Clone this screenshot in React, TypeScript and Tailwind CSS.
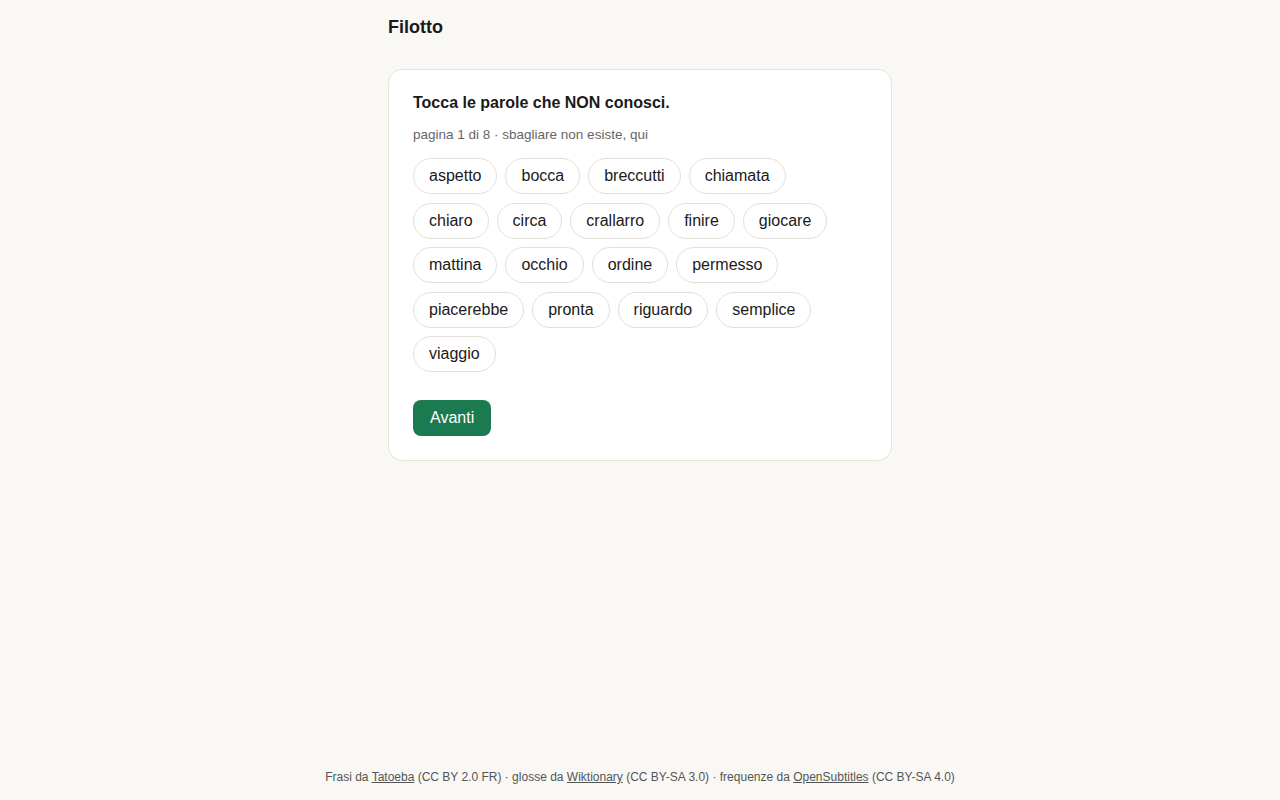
const words = [
  "aspetto",
  "bocca",
  "breccutti",
  "chiamata",
  "chiaro",
  "circa",
  "crallarro",
  "finire",
  "giocare",
  "mattina",
  "occhio",
  "ordine",
  "permesso",
  "piacerebbe",
  "pronta",
  "riguardo",
  "semplice",
  "viaggio",
];

export default function App() {
  return (
    <div className="min-h-[800px] flex flex-col bg-[#f9f8f4] text-[#1a1a1a] font-['Liberation_Sans',Arial,sans-serif]">
      <main className="flex-1 w-[504px] mx-auto pt-[15px]">
        <h1 className="text-[18px] leading-6 font-bold">Filotto</h1>

        <section className="mt-[30px] bg-white border border-[#e8e4da] rounded-[14px] p-6">
          <h2 className="text-[16px] leading-[18px] font-bold">Tocca le parole che NON conosci.</h2>
          <p className="mt-[15px] text-[13.5px] leading-4 text-[#666]">
            pagina 1 di 8 · sbagliare non esiste, qui
          </p>

          <div className="mt-[15px] flex flex-wrap gap-x-2 gap-y-[8.5px]">
            {words.map((w) => (
              <button
                key={w}
                className="h-9 px-[15px] rounded-full border border-[#e4e0d7] bg-white text-[16px] text-[#1a1a1a]"
              >
                {w}
              </button>
            ))}
          </div>

          <button className="mt-7 h-9 px-[17px] rounded-lg bg-[#1b7a4f] text-white text-[16px]">
            Avanti
          </button>
        </section>
      </main>

      <footer className="pb-[15px] text-center text-[12px] leading-4 text-[#555]">
        Frasi da <a className="underline">Tatoeba</a> (CC BY 2.0 FR) · glosse da{" "}
        <a className="underline">Wiktionary</a> (CC BY-SA 3.0) · frequenze da{" "}
        <a className="underline">OpenSubtitles</a> (CC BY-SA 4.0)
      </footer>
    </div>
  );
}
